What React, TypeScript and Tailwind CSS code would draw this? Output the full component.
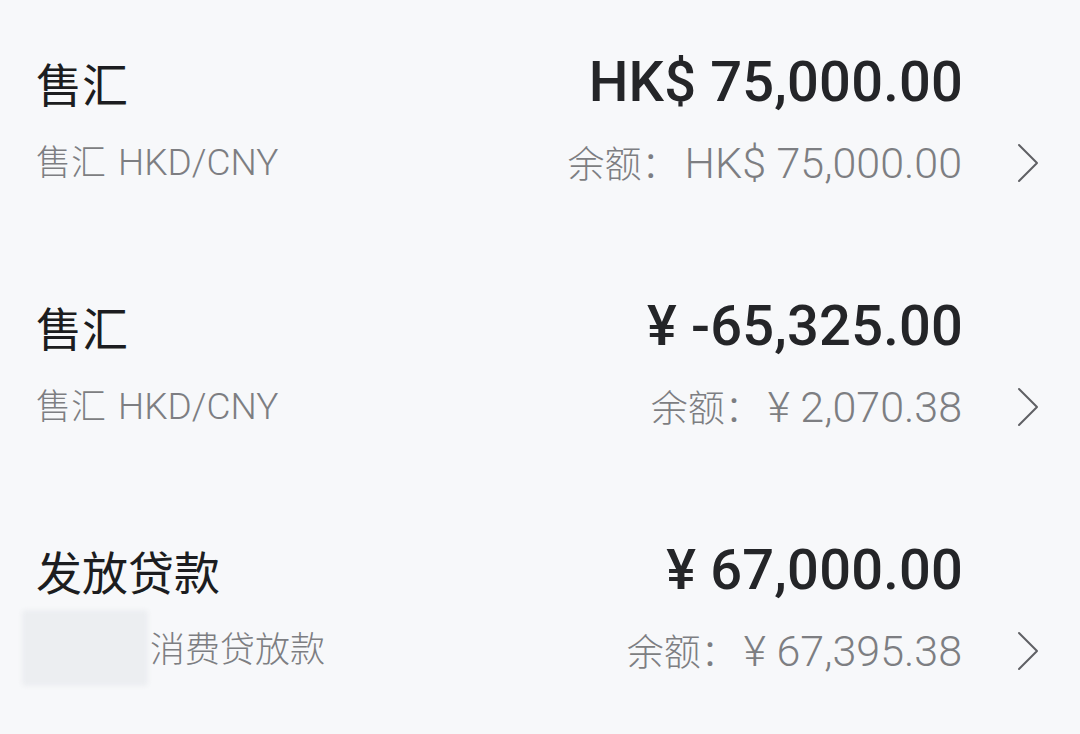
import React from "react";

type Entry = {
  title: string;
  amount: string;
  subCn: string;
  subEn?: string;
  balance: string;
  masked?: boolean;
};

const entries: Entry[] = [
  { title: "售汇", amount: "HK$ 75,000.00", subCn: "售汇", subEn: "HKD/CNY", balance: "HK$ 75,000.00" },
  { title: "售汇", amount: "¥ -65,325.00", subCn: "售汇", subEn: "HKD/CNY", balance: "¥ 2,070.38" },
  { title: "发放贷款", amount: "¥ 67,000.00", subCn: "消费贷放款", balance: "¥ 67,395.38", masked: true },
];

const font = { fontFamily: "Roboto, 'Noto Sans CJK SC', sans-serif" };

function Chevron() {
  return (
    <svg width="24" height="40" viewBox="0 0 24 40" fill="none" className="shrink-0">
      <path d="M3 2 L21 20 L3 38" stroke="#5f6064" strokeWidth="2" strokeLinecap="round" strokeLinejoin="round" />
    </svg>
  );
}

function Row({ e }: { e: Entry }) {
  return (
    <div className="flex flex-col">
      <div className="flex h-[60px] items-center justify-between pr-[117px]">
        <span className="text-[46px] font-normal text-[#1c1d20]" style={{ fontFamily: "'Noto Sans CJK SC', sans-serif" }}>
          {e.title}
        </span>
        <span className="text-[56px] font-medium tracking-[0.2px] text-[#242528]" style={font}>
          {e.amount}
        </span>
      </div>
      <div className="relative mt-[21px] flex h-[60px] items-center justify-between pr-[40px]">
        {e.masked && (
          <div className="absolute left-[-14px] top-[-11px] h-[76px] w-[126px] rounded-[4px] bg-[#eceef1] blur-[2px]" />
        )}
        <span
          className={`flex items-baseline font-light text-[#7d7e82] ${e.masked ? "pl-[114px]" : ""}`}
          style={font}
        >
          <span className="text-[35px]">{e.subCn}</span>
          {e.subEn && <span className="ml-[12px] text-[37px]">{e.subEn}</span>}
        </span>
        <div className="flex items-center gap-[54px]">
          <span className="flex items-baseline font-light text-[#7d7e82]" style={font}>
            <span className="text-[37px]">余额：</span>
            <span className="ml-[6px] text-[43px]">{e.balance}</span>
          </span>
          <Chevron />
        </div>
      </div>
    </div>
  );
}

export default function App() {
  return (
    <div className="h-[734px] w-[1080px] overflow-hidden bg-[#f7f8fa]">
      <div className="flex flex-col gap-[103px] pl-[36px] pt-[52px]">
        {entries.map((e, i) => (
          <Row key={i} e={e} />
        ))}
      </div>
    </div>
  );
}
